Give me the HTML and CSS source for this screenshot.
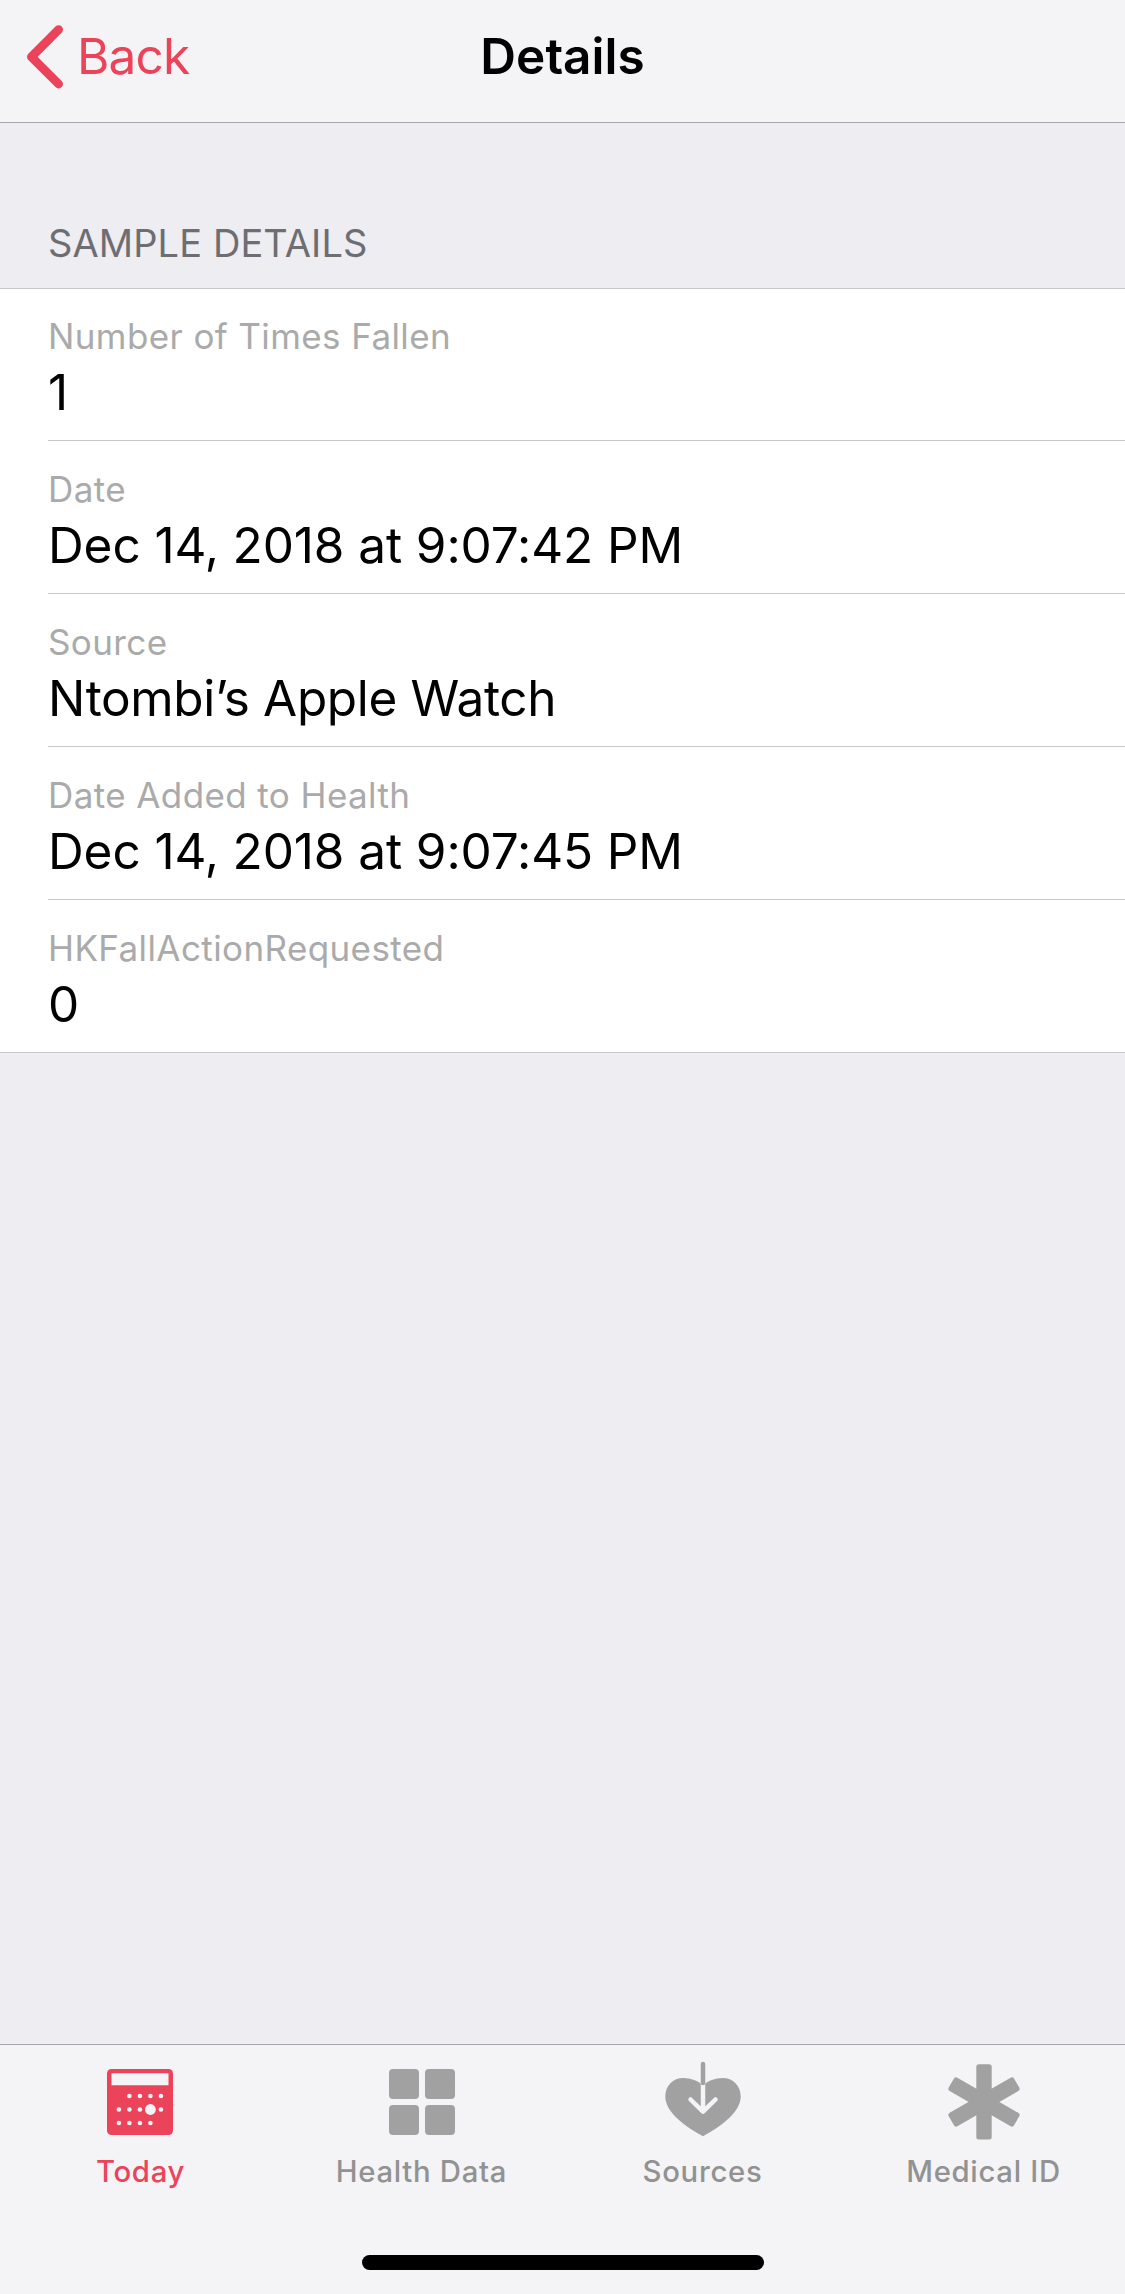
FILE: index.html
```html
<!DOCTYPE html>
<html lang="en">
<head>
    <meta charset="UTF-8">
    <meta name="viewport" content="width=device-width, initial-scale=1.0">
    <title>Details</title>
    <link rel="stylesheet" href="styles.css">
</head>
<body>

    <header class="navbar">
        <a class="back" href="#">
            <svg class="chevron" width="38" height="66" viewBox="0 0 38 66">
                <path d="M32.6 5.6 L5.4 32.8 L32.6 60" />
            </svg>
            <span class="back-text">Back</span>
        </a>
        <h1>Details</h1>
    </header>

    <main class="content">
        <h2>SAMPLE DETAILS</h2>
        <ul class="details">
            <li>
                <span class="label">Number of Times Fallen</span>
                <span class="value">1</span>
            </li>
            <li>
                <span class="label">Date</span>
                <span class="value">Dec 14, 2018 at 9:07:42 PM</span>
            </li>
            <li>
                <span class="label">Source</span>
                <span class="value device">Ntombi’s Apple Watch</span>
            </li>
            <li>
                <span class="label">Date Added to Health</span>
                <span class="value">Dec 14, 2018 at 9:07:45 PM</span>
            </li>
            <li>
                <span class="label">HKFallActionRequested</span>
                <span class="value">0</span>
            </li>
        </ul>
    </main>

    <footer class="tabbar">
        <nav class="tabs">
            <a class="tab active" href="#">
                <svg width="79" height="80" viewBox="0 0 79 80">
                    <rect x="6" y="9" width="66" height="66" rx="4.5" />
                    <g class="cutout">
                        <rect x="10.5" y="13.3" width="57" height="12" rx="0.5" />
                        <circle cx="28.4" cy="36" r="2.3" />
                        <circle cx="38.9" cy="36" r="2.3" />
                        <circle cx="49.4" cy="36" r="2.3" />
                        <circle cx="59.9" cy="36" r="2.3" />
                        <circle cx="17.9" cy="49.5" r="2.3" />
                        <circle cx="28.4" cy="49.5" r="2.3" />
                        <circle cx="38.9" cy="49.5" r="2.3" />
                        <circle cx="49.4" cy="49.5" r="5.4" />
                        <circle cx="59.9" cy="49.5" r="2.3" />
                        <circle cx="17.9" cy="63" r="2.3" />
                        <circle cx="28.4" cy="63" r="2.3" />
                        <circle cx="38.9" cy="63" r="2.3" />
                        <circle cx="49.4" cy="63" r="2.3" />
                    </g>
                </svg>
                <span>Today</span>
            </a>
            <a class="tab" href="#">
                <svg width="79" height="80" viewBox="0 0 79 80">
                    <rect x="7" y="9" width="30" height="30" rx="4" />
                    <rect x="43" y="9" width="30" height="30" rx="4" />
                    <rect x="7" y="45" width="30" height="30" rx="4" />
                    <rect x="43" y="45" width="30" height="30" rx="4" />
                </svg>
                <span>Health Data</span>
            </a>
            <a class="tab" href="#">
                <svg width="79" height="80" viewBox="0 0 79 80">
                    <path d="M40 76.2 C24 68 2.3 52.5 2.3 36.8 C2.3 25.5 10 18 20.3 18 C28 18 35 21 40 25.3 C45 21 52 18 59.7 18 C70 18 77.7 25.5 77.7 36.8 C77.7 52.5 56 68 40 76.2 Z" />
                    <path class="arrow" d="M40 23 V51 M27.5 39.5 L40 51.7 L52.5 39.5" />
                    <path class="stem" d="M40 4 V23" />
                </svg>
                <span>Sources</span>
            </a>
            <a class="tab" href="#">
                <svg width="79" height="80" viewBox="0 0 79 80">
                    <rect x="32.3" y="4.2" width="15.4" height="75.4" rx="2.5" />
                    <rect x="32.3" y="4.2" width="15.4" height="75.4" rx="2.5" transform="rotate(60 40 41.9)" />
                    <rect x="32.3" y="4.2" width="15.4" height="75.4" rx="2.5" transform="rotate(-60 40 41.9)" />
                </svg>
                <span>Medical ID</span>
            </a>
        </nav>
        <div class="home-indicator"></div>
    </footer>

</body>
</html>
```
FILE: styles.css
```css
* {
    box-sizing: border-box;
}
body {
    font-family: Inter, 'Liberation Sans', sans-serif;
    background-color: #eeedf2;
    color: #000;
    margin: 0;
    min-height: 2294px;
    display: flex;
    flex-direction: column;
}
a {
    color: inherit;
    text-decoration: none;
}
.navbar {
    display: grid;
    grid-template-columns: 1fr auto 1fr;
    height: 123px;
    padding: 24px 26px 0;
    background-color: #f4f4f7;
    border-bottom: 1px solid #a5a5aa;
}
.back {
    display: flex;
    gap: 13px;
    color: #eb445a;
}
.chevron {
    fill: none;
    stroke: #eb445a;
    stroke-width: 8.8;
    stroke-linecap: round;
    stroke-linejoin: round;
}
.back-text, h1 {
    font-size: 49.5px;
    line-height: 64px;
}
.back-text {
    letter-spacing: -0.8px;
}
h1 {
    margin: 0;
    font-weight: 600;
}
.content {
    flex: 1;
}
h2 {
    margin: 0;
    height: 165px;
    padding: 96px 48px 0;
    font-size: 38px;
    font-weight: 400;
    letter-spacing: 0.1px;
    line-height: 48px;
    color: #6d6d72;
}
.details {
    list-style: none;
    margin: 0;
    padding: 0 0 0 48px;
    background-color: #fff;
    border-top: 1px solid #c8c7cc;
    border-bottom: 1px solid #c8c7cc;
}
.details li {
    display: flex;
    flex-direction: column;
    gap: 2px;
    height: 153px;
    padding-top: 26px;
    border-bottom: 1px solid #c8c7cc;
}
.details li:first-child {
    height: 152px;
    padding-top: 25px;
}
.details li:last-child {
    height: 152px;
    border-bottom: none;
}
.label {
    font-size: 35px;
    letter-spacing: 0.4px;
    line-height: 44px;
    color: #aaa;
}
.value {
    font-size: 49.5px;
    letter-spacing: -0.1px;
    line-height: 64px;
}
.device {
    letter-spacing: -0.35px;
}
.tabbar {
    height: 250px;
    background-color: #f4f4f7;
    border-top: 1px solid #a5a5aa;
}
.tabs {
    display: grid;
    grid-template-columns: repeat(4, 281px);
    padding-top: 15px;
}
.tab {
    display: flex;
    flex-direction: column;
    align-items: center;
    gap: 13px;
    font-size: 29.3px;
    font-weight: 500;
    letter-spacing: 0.7px;
    line-height: 38px;
    color: #929292;
}
.tab svg {
    fill: #a1a1a1;
}
.tab.active {
    color: #eb445a;
}
.tab.active svg {
    fill: #eb445a;
}
.tab .cutout {
    fill: #f4f4f7;
}
.arrow, .stem {
    fill: none;
    stroke: #f4f4f7;
    stroke-width: 4.5;
    stroke-linecap: round;
    stroke-linejoin: round;
}
.stem {
    stroke: #a1a1a1;
}
.home-indicator {
    width: 402px;
    height: 15px;
    margin: 64px auto 0;
    background-color: #000;
    border-radius: 8px;
}
```
